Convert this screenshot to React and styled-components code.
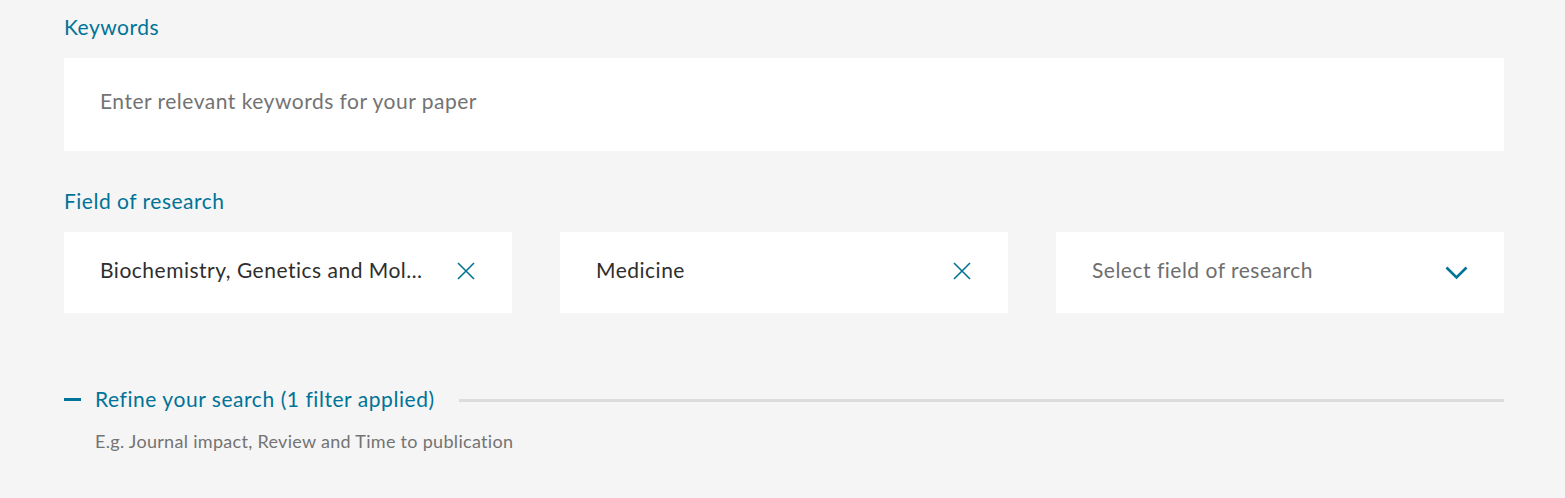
import React from 'react';
import styled, { createGlobalStyle } from 'styled-components';

const GlobalStyle = createGlobalStyle`
  body {
    margin: 0;
    background: #f5f5f5;
    font-family: Lato, "Open Sans", sans-serif;
  }
`;

const Page = styled.div`
  padding: 15px 0 40px 64px;
  width: 1440px;
`;

const Label = styled.div`
  color: #007398;
  font-size: 21px;
  line-height: 24px;
  letter-spacing: 0.5px;
  margin-bottom: 19px;
`;

const KeywordInput = styled.input`
  display: block;
  box-sizing: border-box;
  width: 100%;
  height: 93px;
  padding: 0 36px 8px;
  border: none;
  outline: none;
  background: #fff;
  font-family: inherit;
  font-size: 21px;
  letter-spacing: 0.5px;
  color: #323232;
  margin-bottom: 38px;
  &::placeholder {
    color: #737373;
  }
`;

const SelectRow = styled.div`
  display: grid;
  grid-template-columns: repeat(3, minmax(0, 1fr));
  gap: 48px;
`;

const SelectBox = styled.div`
  box-sizing: border-box;
  height: 81px;
  background: #fff;
  display: flex;
  align-items: center;
  padding: 0 ${p => (p.$chevron ? 36 : 37)}px 6px 36px;
  gap: 28px;
`;

const SelectText = styled.span`
  flex: 1;
  min-width: 0;
  font-size: 21px;
  letter-spacing: 0.5px;
  color: ${p => (p.$placeholder ? '#6e6e6e' : '#2e2e2e')};
  white-space: nowrap;
  overflow: hidden;
  text-overflow: ellipsis;
`;

const IconSvg = styled.svg`
  flex: none;
  display: block;
  margin-top: ${p => p.$offset || 0}px;
`;

const CloseIcon = () => (
  <IconSvg width="18" height="18" viewBox="0 0 18 18" fill="none" $offset={3}>
    <path d="M1 1L17 17M17 1L1 17" stroke="#007398" strokeWidth="1.6" />
  </IconSvg>
);

const ChevronIcon = () => (
  <IconSvg width="23" height="14" viewBox="0 0 23 14" fill="none" $offset={7}>
    <path d="M1.5 1.5L11.5 11.5L21.5 1.5" stroke="#007398" strokeWidth="2.6" />
  </IconSvg>
);

const RefineRow = styled.div`
  display: flex;
  align-items: center;
  margin-top: 74px;
  height: 24px;
`;

const Minus = styled.span`
  width: 17px;
  height: 3px;
  background: #007398;
  margin-right: 14px;
  flex: none;
`;

const RefineTitle = styled.span`
  color: #007398;
  font-size: 21px;
  line-height: 24px;
  letter-spacing: 0.55px;
  white-space: nowrap;
  margin-right: 24px;
`;

const Rule = styled.span`
  flex: 1;
  height: 3px;
  background: #dcdcdc;
  margin-top: 2px;
`;

const Hint = styled.div`
  margin: 20px 0 0 31px;
  font-size: 18px;
  line-height: 20px;
  letter-spacing: 0.3px;
  color: #737373;
`;

const fields = [
  { text: 'Biochemistry, Genetics and Molecular Biology', selected: true },
  { text: 'Medicine', selected: true },
  { text: 'Select field of research', selected: false },
];

export default function App() {
  return (
    <>
      <GlobalStyle />
      <Page>
        <Label>Keywords</Label>
        <KeywordInput placeholder="Enter relevant keywords for your paper" />
        <Label>Field of research</Label>
        <SelectRow>
          {fields.map(f => (
            <SelectBox key={f.text} $chevron={!f.selected}>
              <SelectText $placeholder={!f.selected} title={f.text}>{f.text}</SelectText>
              {f.selected ? <CloseIcon /> : <ChevronIcon />}
            </SelectBox>
          ))}
        </SelectRow>
        <RefineRow>
          <Minus />
          <RefineTitle>Refine your search (1 filter applied)</RefineTitle>
          <Rule />
        </RefineRow>
        <Hint>E.g. Journal impact, Review and Time to publication</Hint>
      </Page>
    </>
  );
}
